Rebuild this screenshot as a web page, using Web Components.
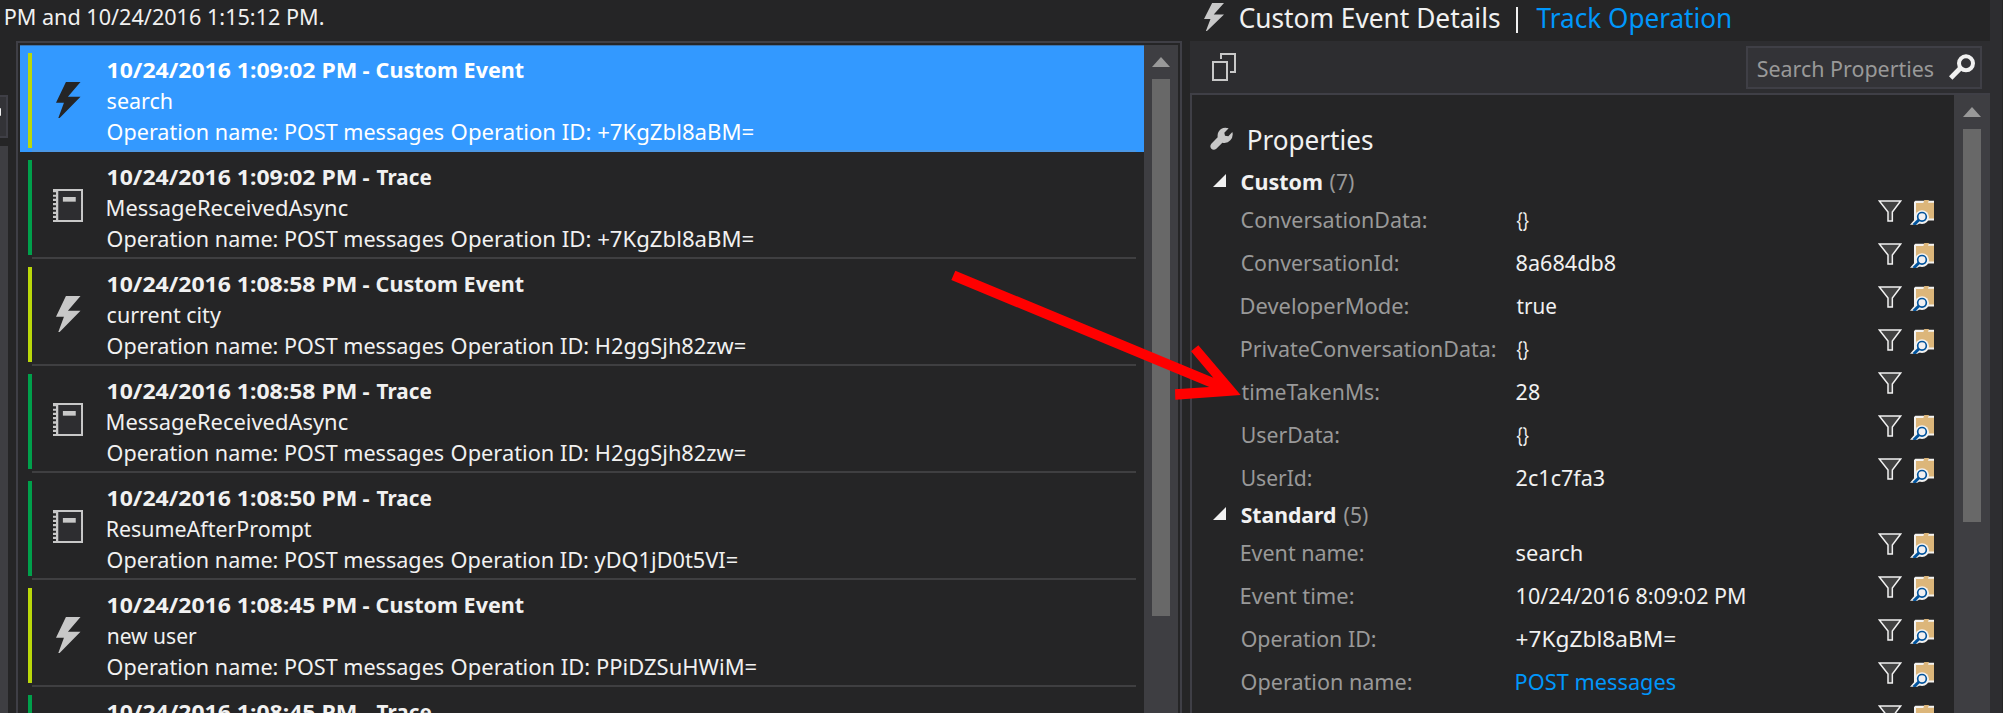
<!DOCTYPE html>
<html lang="en">
<head>
<meta charset="utf-8">
<title>Event Details</title>
<style>
  body { margin: 0; background: #252526; overflow: hidden; }
</style>
</head>
<body>
<search-window></search-window>
<script>
const define = (name, css, html, init) => customElements.define(name, class extends HTMLElement {
  connectedCallback() {
    if (this.shadowRoot) return;
    const root = this.attachShadow({ mode: 'open' });
    root.innerHTML = `<style>${css}</style>${typeof html === 'function' ? html(this) : html}`;
    if (init) init(this, root);
  }
});

/* A run of text whose inked width is given by the "w" attribute. */
const ctx = document.createElement('canvas').getContext('2d');
define('fit-text',
  `:host{display:inline-block;white-space:pre;flex:none}
   span{display:inline-block;transform-origin:0 0}`,
  '<span><slot></slot></span>',
  (host, root) => {
    const cs = getComputedStyle(host);
    ctx.font = `${cs.fontWeight} ${cs.fontSize} ${cs.fontFamily}`;
    const m = ctx.measureText(host.textContent);
    const w = +host.getAttribute('w');
    const k = w / (m.actualBoundingBoxLeft + m.actualBoundingBoxRight);
    host.style.width = w + 'px';
    root.querySelector('span').style.transform =
      `translateX(${m.actualBoundingBoxLeft * k + 0.6}px) scaleX(${k})`;
  });

const BOLT = '<path d="M30 0H74L36 44H74L11 108H7L24 62H0Z" fill="currentColor"/>';
const ICONS = {
  bolt: [74, 108, BOLT],
  book: [91, 99, '<path d="M15 3H88V96H15Z" fill="#2d2d30"/><path d="M0 0H91V99H0V93H9V87H0V80H9V75H0V68H9V62H0V55H9V49H0V42H9V36H0V29H9V23H0V17H9V10H0ZM16 6V93H85V6Z" fill="#c8c8c8" fill-rule="evenodd"/><path d="M30 24H69V38H30Z" fill="#c8c8c8"/>'],
  copy: [72, 84, '<path d="M27 18V3H69V57H54" fill="none" stroke="#c8c8c8" stroke-width="6"/><path d="M3 27H45V81H3Z" fill="#2d2d30" stroke="#c8c8c8" stroke-width="6"/>'],
  wrench: [69, 69, '<path d="M56 4Q44 -1 33 6Q21 15 23 31L4 50Q-2 58 4 65Q11 71 19 65L37 47Q52 50 61 40Q71 29 67 15L55 28L45 26L43 17Z" fill="#c8c8c8"/>'],
  glass: [78, 78, '<circle cx="51" cy="28" r="21" fill="none" stroke="#f1f1f1" stroke-width="12"/><path d="M34 43L5 72" stroke="#f1f1f1" stroke-width="15"/>'],
  funnel: [72, 66, '<path d="M4 3H68L43 36V63H30V36Z" fill="#424242" stroke="#f1f1f1" stroke-width="4.5"/>'],
  folder: [72, 76, '<path d="M12 6L16 2H72V62H12Z" fill="#f3f2f0"/><path d="M18 9H40L43 0H57L54 8H72V56H18Z" fill="#dcb67a"/><circle cx="36" cy="52" r="21" fill="#f3f2f0"/><path d="M16 57L0 75H22L34 68Z" fill="#f3f2f0"/><circle cx="36" cy="51" r="13" fill="#f0eff1" stroke="#00539c" stroke-width="5"/><path d="M27 60L11 76" stroke="#00539c" stroke-width="9"/>'],
  open: [39, 39, '<path d="M39 0V39H0Z" fill="#f1f1f1"/>']
};
define('ui-icon', ':host{display:block;flex:none}svg{display:block;width:100%;height:100%}', h => {
  const [w, ht, body] = ICONS[h.getAttribute('name')];
  return `<svg viewBox="0 0 ${w} ${ht}" preserveAspectRatio="none">${body}</svg>`;
});

define('scroll-bar',
  `:host{display:flex;flex-direction:column;align-items:center;background:#3e3e42;flex:none;box-sizing:border-box;padding-top:12px}
   .up{width:0;border:9px solid transparent;border-top:0;border-bottom:10px solid #999}
   .thumb{width:18px;background:#686868;margin-top:12px;height:var(--thumb)}`,
  '<div class="up"></div><div class="thumb"></div>');

define('event-item',
  `:host{display:flex;position:relative;height:107px;box-sizing:border-box;padding:8px 8px 0;background:#252526;color:#f1f1f1}
   :host([selected]){background:#3399ff;color:#fff;box-shadow:inset 0 1px #3a74b0}
   .bar{width:4px;height:95px;background:var(--c);flex:none}
   .main{flex:1;display:flex;height:99px;box-sizing:border-box;border-bottom:2px solid #3f3f41}
   :host([selected]) .main{border-color:#4b97e4}
   .ic{width:75px;flex:none}
   ui-icon{margin:29px 0 0 24px;width:24.5px;height:36px;color:#c8c8c8}
   ui-icon[name=book]{margin:29px 0 0 21px;width:30px;height:33px}
   :host([selected]) ui-icon{color:#252526}
   .t{display:flex;flex-direction:column;line-height:31px;padding-top:1px;font-size:22px}
   b,.op{font-weight:700;display:flex;gap:7px;height:31px}
   .op{font-weight:400;gap:8px}`,
  h => {
    const d = h.data;
    h.style.setProperty('--c', d.trace ? '#00a04b' : '#bad80a');
    return `<div class="bar"></div><div class="main"><div class="ic"><ui-icon name="${d.trace ? 'book' : 'bolt'}"></ui-icon></div>
    <div class="t"><b><fit-text w="248">10/24/2016 ${d.time} PM</fit-text><fit-text w="7">-</fit-text><fit-text w="${d.trace ? 55 : 147}">${d.trace ? 'Trace' : 'Custom Event'}</fit-text></b>
    <fit-text w="${d.w}">${d.msg}</fit-text>
    <div class="op"><fit-text w="336">Operation name: POST messages</fit-text><fit-text w="${d.ow - 344}">Operation ID: ${d.id}</fit-text></div></div></div>`;
  });

define('event-list',
  `:host{display:flex;border:2px solid #3f3f46;border-bottom:0;box-sizing:border-box;padding:2px 2px 0;overflow:hidden}
   .rows{flex:1}
   scroll-bar{width:34px;--thumb:537px}`,
  '<div class="rows"></div><scroll-bar></scroll-bar>',
  (h, root) => {
    [{ time: '1:09:02', msg: 'search', w: 64, id: '+7KgZbl8aBM=', ow: 646, sel: 1 },
     { time: '1:09:02', trace: 1, msg: 'MessageReceivedAsync', w: 240, id: '+7KgZbl8aBM=', ow: 646 },
     { time: '1:08:58', msg: 'current city', w: 114, id: 'H2ggSjh82zw=', ow: 638 },
     { time: '1:08:58', trace: 1, msg: 'MessageReceivedAsync', w: 240, id: 'H2ggSjh82zw=', ow: 638 },
     { time: '1:08:50', trace: 1, msg: 'ResumeAfterPrompt', w: 204, id: 'yDQ1jD0t5VI=', ow: 630 },
     { time: '1:08:45', msg: 'new user', w: 89, id: 'PPiDZSuHWiM=', ow: 649 },
     { time: '1:08:45', trace: 1, msg: '', w: 1, id: '', ow: 490 }
    ].forEach(d => {
      const e = document.createElement('event-item');
      e.data = d;
      if (d.sel) e.setAttribute('selected', '');
      root.querySelector('.rows').append(e);
    });
  });

define('prop-row',
  `:host{display:flex;height:43px;line-height:43px;font-size:22px;color:#999}
   .k{width:275px;flex:none}
   .v{flex:1;color:#f1f1f1}
   :host([link]) .v{color:#0097fb}
   .a{display:flex;gap:8px;padding:2px 20px 0 0;width:56px;flex:none}
   ui-icon[name=funnel]{width:24px;height:22px}
   ui-icon[name=folder]{width:24px;height:25px}`,
  h => {
    const [k, kw, v, vw, one] = h.data;
    return `<div class="k">${k ? `<fit-text w="${kw}">${k}</fit-text>` : ''}</div><div class="v">${v ? `<fit-text w="${vw}">${v}</fit-text>` : ''}</div>
    <div class="a"><ui-icon name="funnel"></ui-icon>${one ? '' : '<ui-icon name="folder"></ui-icon>'}</div>`;
  });

define('prop-group',
  `:host{display:block;font-size:22px}
   .h{display:flex;height:33px;line-height:33px;color:#999}
   ui-icon{width:13px;height:13px;margin:9px 15px 0 21px}
   b{color:#f1f1f1;margin-right:8px}
   .r{padding-left:49px}`,
  h => `<div class="h"><ui-icon name="open"></ui-icon><b><fit-text w="${h.getAttribute('tw')}">${h.getAttribute('title')}</fit-text></b><fit-text w="24">(${h.getAttribute('count')})</fit-text></div><div class="r"></div>`,
  (h, root) => {
    const sets = {
      Custom: [['ConversationData:', 185, '{}', 12], ['ConversationId:', 157, '8a684db8', 99], ['DeveloperMode:', 167, 'true', 40],
        ['PrivateConversationData:', 254, '{}', 12], ['timeTakenMs:', 137.5, '28', 23, 1], ['UserData:', 97.5, '{}', 12], ['UserId:', 70, '2c1c7fa3', 88]],
      Standard: [['Event name:', 122, 'search', 65], ['Event time:', 112, '10/24/2016 8:09:02 PM', 228], ['Operation ID:', 134, '+7KgZbl8aBM=', 159],
        ['Operation name:', 170, 'POST messages', 159], ['', 0, '', 0]]
    };
    sets[h.getAttribute('title')].forEach(d => {
      const e = document.createElement('prop-row');
      e.data = d;
      if (d[2] === 'POST messages') e.setAttribute('link', '');
      root.querySelector('.r').append(e);
    });
    h.removeAttribute('title');
  });

define('details-pane',
  `:host{display:flex;flex-direction:column;width:800px}
   .head{display:flex;height:41px;line-height:35px;font-size:27px;color:#f1f1f1}
   .head ui-icon{width:20px;height:28px;margin:3px 14.5px 0 14px;color:#c8c8c8}
   .sep{width:2px;height:26px;background:#f1f1f1;margin:7px 18px 0 17px}
   .head .track{color:#0097fb}
   .bar{display:flex;justify-content:space-between;height:52px;background:#2d2d30}
   .bar>ui-icon{width:24px;height:28px;margin:12px 0 0 22px}
   .find{display:flex;justify-content:space-between;box-sizing:border-box;width:236px;height:43px;margin:5px 8px 0 0;border:2px solid #3f3f46;background:#333337;padding:0 5px 0 9px;line-height:41px;font-size:22px;color:#999}
   .find ui-icon{width:26px;height:26px;margin-top:6px}
   .body{display:flex;flex:1;min-height:0;overflow:hidden;border:2px solid #3f3f46;border-width:2px 0 0 2px}
   .props{flex:1}
   .title{display:flex;height:39px;line-height:39px;font-size:27px;color:#f1f1f1;margin:25px 0 6px}
   .title ui-icon{width:23px;height:23px;margin:7px 14.5px 0 18px}
   .second{margin-top:-1px}
   scroll-bar{width:36px;--thumb:393px}`,
  `<div class="head"><ui-icon name="bolt"></ui-icon><fit-text w="260">Custom Event Details</fit-text><div class="sep"></div><fit-text class="track" w="194">Track Operation</fit-text></div>
   <div class="bar"><ui-icon name="copy"></ui-icon><div class="find"><fit-text w="176">Search Properties</fit-text><ui-icon name="glass"></ui-icon></div></div>
   <div class="body"><div class="props"><div class="title"><ui-icon name="wrench"></ui-icon><fit-text w="124">Properties</fit-text></div>
   <prop-group title="Custom" count="7" tw="80"></prop-group><prop-group class="second" title="Standard" count="5" tw="94"></prop-group></div><scroll-bar></scroll-bar></div>`);

define('edge-strip',
  `:host{display:flex;flex-direction:column;width:8px;margin-right:8px;height:713px;overflow:hidden}
   .box{box-sizing:border-box;height:43px;margin-top:54px;background:#333337;border:2px solid #3f3f46;border-left:0;padding-top:11px}
   .dot{width:1px;height:8px;background:#f1f1f1;border-radius:0 2px 2px 0}
   .track{flex:1;margin-top:8px;background:#3e3e42}`,
  '<div class="box"><div class="dot"></div></div><div class="track"></div>');

define('red-arrow',
  ':host{position:absolute;left:900px;top:250px;width:360px;height:170px}svg{display:block}',
  '<svg width="360" height="170" viewBox="0 0 1080 510"><path d="M166 62L940 383L873 304L895 286L1022 435L826 449L825 418L928 411L154 90Z" fill="#f00"/></svg>');

define('search-window',
  `:host{display:grid;position:relative;width:2003px;height:713px;overflow:hidden;background:#252526;
     grid-template:713px / 1190px 800px 13px;font-family:"Noto Sans",sans-serif;color:#f1f1f1}
   .left{display:flex;flex-direction:column}
   .status{height:41px;line-height:33px;font-size:22px;padding-left:5px}
   .cols{display:flex;height:672px}
   edge-strip{height:672px}
   event-list{width:1166px}
   .edge{background:#2d2d30;border-right:1px solid #252526}`,
  `<div class="left"><div class="status"><fit-text w="318">PM and 10/24/2016 1:15:12 PM.</fit-text></div>
   <div class="cols"><edge-strip></edge-strip><event-list></event-list></div></div>
   <details-pane></details-pane><div class="edge"></div><red-arrow></red-arrow>`);
</script>
</body>
</html>
